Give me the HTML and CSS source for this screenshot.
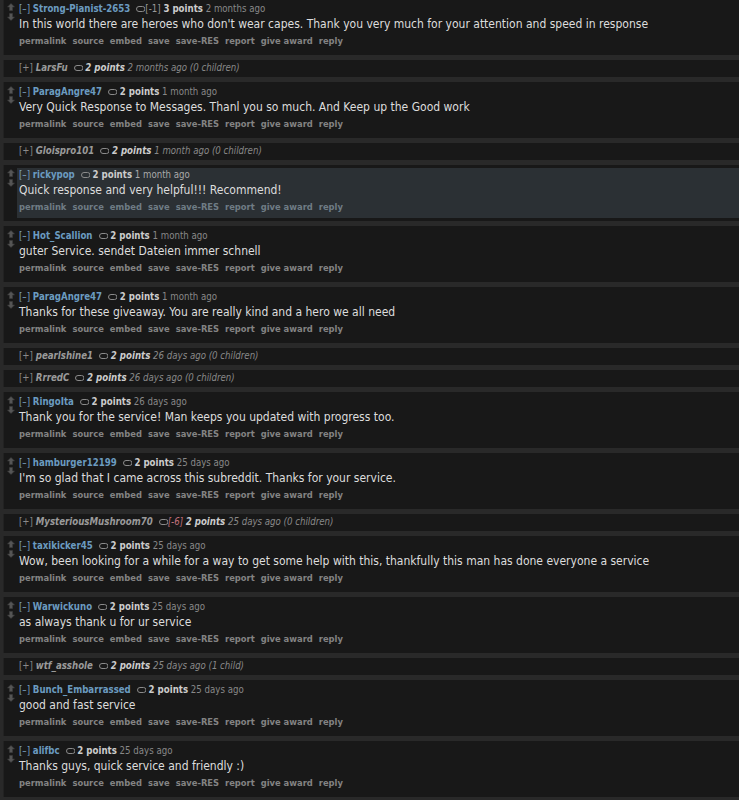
FILE: index.html
```html
<!DOCTYPE html>
<html>
<head>
<meta charset="utf-8">
<link rel="stylesheet" href="styles.css">
</head>
<body>
<svg width="0" height="0" class="defs">
  <defs>
    <symbol id="up" viewBox="0 0 8 8"><path d="M4 0.5 L7.5 4 L5.5 4 L5.5 7.5 L2.5 7.5 L2.5 4 L0.5 4 Z" fill="#555555" stroke="#3e3e3e" stroke-width="0.6"/></symbol>
    <symbol id="down" viewBox="0 0 8 8"><path d="M4 7.5 L7.5 4 L5.5 4 L5.5 0.5 L2.5 0.5 L2.5 4 L0.5 4 Z" fill="#555555" stroke="#3e3e3e" stroke-width="0.6"/></symbol>
    <symbol id="tag" viewBox="0 0 9 6"><path d="M3 0.5 H6.5 A2.5 2.5 0 0 1 6.5 5.5 H3 A2.5 2.5 0 0 1 3 0.5 Z" fill="none" stroke="#8a8a8a" stroke-width="1"/></symbol>
  </defs>
</svg>
<div class="list">

  <div class="comment">
    <div class="midcol"><svg class="arrow"><use href="#up"/></svg><svg class="arrow"><use href="#down"/></svg></div>
    <div class="entry">
      <p class="tagline"><span class="expand">[–]</span> <span class="author">Strong-Pianist-2653</span><svg class="tag"><use href="#tag"/></svg><span class="weight">[-1]</span> <span class="score">3 points</span> <span class="time">2 months ago</span></p>
      <div class="md">In this world there are heroes who don't wear capes. Thank you very much for your attention and speed in response</div>
      <ul class="buttons"><li>permalink</li><li>source</li><li>embed</li><li>save</li><li>save-RES</li><li>report</li><li>give award</li><li>reply</li></ul>
    </div>
  </div>

  <div class="comment collapsed">
    <div class="entry">
      <p class="tagline"><span class="expand">[+]</span> <span class="author">LarsFu</span><svg class="tag"><use href="#tag"/></svg> <span class="score">2 points</span> <span class="time">2 months ago (0 children)</span></p>
    </div>
  </div>

  <div class="comment">
    <div class="midcol"><svg class="arrow"><use href="#up"/></svg><svg class="arrow"><use href="#down"/></svg></div>
    <div class="entry">
      <p class="tagline"><span class="expand">[–]</span> <span class="author">ParagAngre47</span><svg class="tag"><use href="#tag"/></svg> <span class="score">2 points</span> <span class="time">1 month ago</span></p>
      <div class="md">Very Quick Response to Messages. Thanl you so much. And Keep up the Good work</div>
      <ul class="buttons"><li>permalink</li><li>source</li><li>embed</li><li>save</li><li>save-RES</li><li>report</li><li>give award</li><li>reply</li></ul>
    </div>
  </div>

  <div class="comment collapsed">
    <div class="entry">
      <p class="tagline"><span class="expand">[+]</span> <span class="author">Gloispro101</span><svg class="tag"><use href="#tag"/></svg> <span class="score">2 points</span> <span class="time">1 month ago (0 children)</span></p>
    </div>
  </div>

  <div class="comment">
    <div class="midcol"><svg class="arrow"><use href="#up"/></svg><svg class="arrow"><use href="#down"/></svg></div>
    <div class="entry highlight">
      <p class="tagline"><span class="expand">[–]</span> <span class="author">rickypop</span><svg class="tag"><use href="#tag"/></svg> <span class="score">2 points</span> <span class="time bright">1 month ago</span></p>
      <div class="md">Quick response and very helpful!!! Recommend!</div>
      <ul class="buttons"><li>permalink</li><li>source</li><li>embed</li><li>save</li><li>save-RES</li><li>report</li><li>give award</li><li>reply</li></ul>
    </div>
  </div>

  <div class="comment">
    <div class="midcol"><svg class="arrow"><use href="#up"/></svg><svg class="arrow"><use href="#down"/></svg></div>
    <div class="entry">
      <p class="tagline"><span class="expand">[–]</span> <span class="author">Hot_Scallion</span><svg class="tag"><use href="#tag"/></svg> <span class="score">2 points</span> <span class="time">1 month ago</span></p>
      <div class="md">guter Service. sendet Dateien immer schnell</div>
      <ul class="buttons"><li>permalink</li><li>source</li><li>embed</li><li>save</li><li>save-RES</li><li>report</li><li>give award</li><li>reply</li></ul>
    </div>
  </div>

  <div class="comment">
    <div class="midcol"><svg class="arrow"><use href="#up"/></svg><svg class="arrow"><use href="#down"/></svg></div>
    <div class="entry">
      <p class="tagline"><span class="expand">[–]</span> <span class="author">ParagAngre47</span><svg class="tag"><use href="#tag"/></svg> <span class="score">2 points</span> <span class="time">1 month ago</span></p>
      <div class="md">Thanks for these giveaway. You are really kind and a hero we all need</div>
      <ul class="buttons"><li>permalink</li><li>source</li><li>embed</li><li>save</li><li>save-RES</li><li>report</li><li>give award</li><li>reply</li></ul>
    </div>
  </div>

  <div class="comment collapsed">
    <div class="entry">
      <p class="tagline"><span class="expand">[+]</span> <span class="author">pearlshine1</span><svg class="tag"><use href="#tag"/></svg> <span class="score">2 points</span> <span class="time">26 days ago (0 children)</span></p>
    </div>
  </div>

  <div class="comment collapsed">
    <div class="entry">
      <p class="tagline"><span class="expand">[+]</span> <span class="author">RrredC</span><svg class="tag"><use href="#tag"/></svg> <span class="score">2 points</span> <span class="time">26 days ago (0 children)</span></p>
    </div>
  </div>

  <div class="comment">
    <div class="midcol"><svg class="arrow"><use href="#up"/></svg><svg class="arrow"><use href="#down"/></svg></div>
    <div class="entry">
      <p class="tagline"><span class="expand">[–]</span> <span class="author">RingoIta</span><svg class="tag"><use href="#tag"/></svg> <span class="score">2 points</span> <span class="time">26 days ago</span></p>
      <div class="md">Thank you for the service! Man keeps you updated with progress too.</div>
      <ul class="buttons"><li>permalink</li><li>source</li><li>embed</li><li>save</li><li>save-RES</li><li>report</li><li>give award</li><li>reply</li></ul>
    </div>
  </div>

  <div class="comment">
    <div class="midcol"><svg class="arrow"><use href="#up"/></svg><svg class="arrow"><use href="#down"/></svg></div>
    <div class="entry">
      <p class="tagline"><span class="expand">[–]</span> <span class="author">hamburger12199</span><svg class="tag"><use href="#tag"/></svg> <span class="score">2 points</span> <span class="time">25 days ago</span></p>
      <div class="md">I'm so glad that I came across this subreddit. Thanks for your service.</div>
      <ul class="buttons"><li>permalink</li><li>source</li><li>embed</li><li>save</li><li>save-RES</li><li>report</li><li>give award</li><li>reply</li></ul>
    </div>
  </div>

  <div class="comment collapsed">
    <div class="entry">
      <p class="tagline"><span class="expand">[+]</span> <span class="author">MysteriousMushroom70</span><svg class="tag"><use href="#tag"/></svg><span class="weight neg">[-6]</span> <span class="score">2 points</span> <span class="time">25 days ago (0 children)</span></p>
    </div>
  </div>

  <div class="comment">
    <div class="midcol"><svg class="arrow"><use href="#up"/></svg><svg class="arrow"><use href="#down"/></svg></div>
    <div class="entry">
      <p class="tagline"><span class="expand">[–]</span> <span class="author">taxikicker45</span><svg class="tag"><use href="#tag"/></svg> <span class="score">2 points</span> <span class="time">25 days ago</span></p>
      <div class="md">Wow, been looking for a while for a way to get some help with this, thankfully this man has done everyone a service</div>
      <ul class="buttons"><li>permalink</li><li>source</li><li>embed</li><li>save</li><li>save-RES</li><li>report</li><li>give award</li><li>reply</li></ul>
    </div>
  </div>

  <div class="comment">
    <div class="midcol"><svg class="arrow"><use href="#up"/></svg><svg class="arrow"><use href="#down"/></svg></div>
    <div class="entry">
      <p class="tagline"><span class="expand">[–]</span> <span class="author">Warwickuno</span><svg class="tag"><use href="#tag"/></svg> <span class="score">2 points</span> <span class="time">25 days ago</span></p>
      <div class="md">as always thank u for ur service</div>
      <ul class="buttons"><li>permalink</li><li>source</li><li>embed</li><li>save</li><li>save-RES</li><li>report</li><li>give award</li><li>reply</li></ul>
    </div>
  </div>

  <div class="comment collapsed">
    <div class="entry">
      <p class="tagline"><span class="expand">[+]</span> <span class="author">wtf_asshole</span><svg class="tag"><use href="#tag"/></svg> <span class="score">2 points</span> <span class="time">25 days ago (1 child)</span></p>
    </div>
  </div>

  <div class="comment">
    <div class="midcol"><svg class="arrow"><use href="#up"/></svg><svg class="arrow"><use href="#down"/></svg></div>
    <div class="entry">
      <p class="tagline"><span class="expand">[–]</span> <span class="author">Bunch_Embarrassed</span><svg class="tag"><use href="#tag"/></svg> <span class="score">2 points</span> <span class="time">25 days ago</span></p>
      <div class="md">good and fast service</div>
      <ul class="buttons"><li>permalink</li><li>source</li><li>embed</li><li>save</li><li>save-RES</li><li>report</li><li>give award</li><li>reply</li></ul>
    </div>
  </div>

  <div class="comment">
    <div class="midcol"><svg class="arrow"><use href="#up"/></svg><svg class="arrow"><use href="#down"/></svg></div>
    <div class="entry">
      <p class="tagline"><span class="expand">[–]</span> <span class="author">alifbc</span><svg class="tag"><use href="#tag"/></svg> <span class="score">2 points</span> <span class="time">25 days ago</span></p>
      <div class="md">Thanks guys, quick service and friendly :)</div>
      <ul class="buttons"><li>permalink</li><li>source</li><li>embed</li><li>save</li><li>save-RES</li><li>report</li><li>give award</li><li>reply</li></ul>
    </div>
  </div>

</div>
</body>
</html>
```

FILE: styles.css
```css
html, body {
  margin: 0;
  padding: 0;
  background: #292929;
  height: 100%;
  overflow: hidden;
}
body {
  font-family: "DejaVu Sans Condensed", "DejaVu Sans", Verdana, sans-serif;
  color: #dddddd;
}
.defs {
  position: absolute;
  width: 0;
  height: 0;
}
.list {
  margin-top: -1px;
  display: flex;
  flex-direction: column;
  gap: 5px;
}
.comment {
  margin-left: 3px;
  background: #181818;
  border-left: 1px solid #222222;
  display: flex;
  height: 56px;
  box-sizing: border-box;
}
.comment.collapsed {
  height: 17px;
}
.midcol {
  width: 12px;
  padding-left: 1px;
  display: flex;
  flex-direction: column;
  align-items: center;
  padding-top: 4px;
  gap: 2px;
}
.arrow {
  width: 8px;
  height: 8px;
  display: block;
}
.entry {
  flex: 1;
  padding: 4px 0 0 2px;
}
.collapsed .entry {
  padding: 2px 0 0 15px;
}
.entry.highlight {
  background: #2b3034;
  margin: 3px 0 3px 0;
  padding: 1px 0 0 2px;
}
.tagline {
  margin: 0;
  font-size: 9.6px;
  line-height: 11px;
  color: #888888;
  white-space: nowrap;
}
.collapsed .tagline {
  font-style: italic;
  line-height: 12px;
}
.expand {
  color: #7ba3c2;
  font-style: normal;
}
.collapsed .expand {
  color: #8a8a8a;
}
.author {
  color: #6b9bc0;
  font-weight: bold;
}
.collapsed .author {
  color: #9a9a9a;
}
.tag {
  width: 9px;
  height: 6px;
  margin: 0 0 0 6px;
  vertical-align: 0;
}
.weight {
  color: #9a9a9a;
}
.weight.neg {
  color: #c0707a;
}
.score {
  color: #cccccc;
  font-weight: bold;
}
.time.bright {
  color: #aaaaaa;
}
.md {
  margin-top: 2px;
  font-size: 12px;
  line-height: 16px;
  color: #dddddd;
  white-space: nowrap;
}
.buttons {
  list-style: none;
  margin: 2px 0 0 0;
  padding: 0;
  display: flex;
  gap: 6px;
  font-size: 9.3px;
  line-height: 14px;
  font-weight: bold;
  color: #838383;
}
.highlight .buttons {
  color: #6f7c85;
}
```
